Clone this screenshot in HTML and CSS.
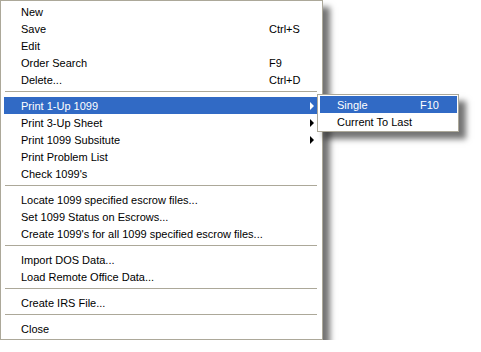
FILE: index.html
```html
<!DOCTYPE html>
<html lang="en">
<head>
    <meta charset="UTF-8">
    <title>1099 Menu</title>
    <link rel="stylesheet" href="styles.css">
</head>
<body>
    <div class="menu main-menu">
        <div class="item"><span class="label">New</span><span class="key"></span><span class="arrow"></span></div>
        <div class="item"><span class="label">Save</span><span class="key">Ctrl+S</span><span class="arrow"></span></div>
        <div class="item"><span class="label">Edit</span><span class="key"></span><span class="arrow"></span></div>
        <div class="item"><span class="label">Order Search</span><span class="key">F9</span><span class="arrow"></span></div>
        <div class="item"><span class="label">Delete...</span><span class="key">Ctrl+D</span><span class="arrow"></span></div>
        <div class="sep"></div>
        <div class="item active"><span class="label">Print 1-Up 1099</span><span class="key"></span><span class="arrow"><i class="tri"></i></span></div>
        <div class="item"><span class="label">Print 3-Up Sheet</span><span class="key"></span><span class="arrow"><i class="tri"></i></span></div>
        <div class="item"><span class="label">Print 1099 Subsitute</span><span class="key"></span><span class="arrow"><i class="tri"></i></span></div>
        <div class="item"><span class="label">Print Problem List</span><span class="key"></span><span class="arrow"></span></div>
        <div class="item"><span class="label">Check 1099's</span><span class="key"></span><span class="arrow"></span></div>
        <div class="sep"></div>
        <div class="item"><span class="label">Locate 1099 specified escrow files...</span><span class="key"></span><span class="arrow"></span></div>
        <div class="item"><span class="label">Set 1099 Status on Escrows...</span><span class="key"></span><span class="arrow"></span></div>
        <div class="item"><span class="label">Create 1099's for all 1099 specified escrow files...</span><span class="key"></span><span class="arrow"></span></div>
        <div class="sep"></div>
        <div class="item"><span class="label">Import DOS Data...</span><span class="key"></span><span class="arrow"></span></div>
        <div class="item"><span class="label">Load Remote Office Data...</span><span class="key"></span><span class="arrow"></span></div>
        <div class="sep"></div>
        <div class="item"><span class="label">Create IRS File...</span><span class="key"></span><span class="arrow"></span></div>
        <div class="sep"></div>
        <div class="item"><span class="label">Close</span><span class="key"></span><span class="arrow"></span></div>
    </div>

    <!-- submenu of "Print 1-Up 1099" -->
    <div class="menu sub-menu">
        <div class="item active"><span class="label">Single</span><span class="key">F10</span></div>
        <div class="item"><span class="label">Current To Last</span><span class="key"></span></div>
    </div>
</body>
</html>
```

FILE: styles.css
```css
body {
    margin: 0;
    background-color: #fff;
    font-family: 'Liberation Sans', Arial, sans-serif;
    font-size: 11px;
    color: #000;
    position: relative;
}

.menu {
    background-color: #fff;
    border: 1px solid #aca899;
    box-shadow: 7px 7px 6px rgba(0,0,0,0.55);
    box-sizing: border-box;
}

.main-menu {
    width: 323px;
    padding: 2px 4px 2px 3px;
}

.sub-menu {
    position: absolute;
    left: 317px;
    top: 94px;
    width: 142px;
    padding: 1px 1px 1px 2px;
}

.item {
    display: flex;
    align-items: center;
    height: 17px;
    padding-left: 17px;
    white-space: nowrap;
}

.item .label {
    flex: 1;
}

.main-menu .key {
    width: 41px;
}

.sub-menu .key {
    width: 37px;
}

.arrow {
    width: 8px;
    display: flex;
    align-items: center;
}

.tri {
    display: block;
    width: 0;
    height: 0;
    border-left: 4px solid #000;
    border-top: 4px solid transparent;
    border-bottom: 4px solid transparent;
}

.item.active {
    background-color: #316ac5;
    color: #fff;
}

.item.active .tri {
    border-left-color: #fff;
}

.sep {
    height: 1px;
    background-color: #aca899;
    margin: 3px 1px 5px 1px;
}
```
